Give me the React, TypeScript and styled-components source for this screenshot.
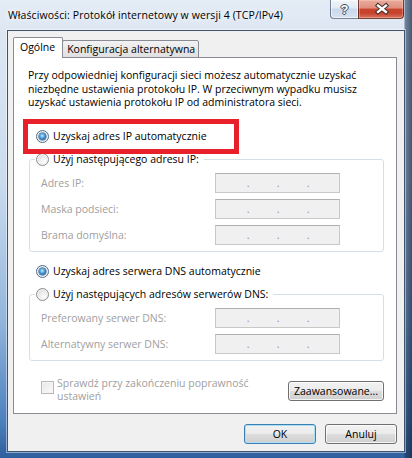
import React from "react";
import styled, { createGlobalStyle, css } from "styled-components";

const FONT = `"Open Sans", "Noto Sans", "Liberation Sans", sans-serif`;

const GlobalStyle = createGlobalStyle`
  html, body { margin: 0; padding: 0; }
  body { font-family: ${FONT}; }
  * { box-sizing: border-box; }
`;

const Window = styled.div`
  width: 412px;
  height: 458px;
  display: flex;
  flex-direction: column;
  padding: 0 7px 6px 7px;
  font-family: ${FONT};
  font-size: 10.5px;
  color: #000;
  overflow: hidden;
  background:
    linear-gradient(to right, rgba(255,255,255,0) 0, rgba(255,255,255,0) 404px, rgba(25,50,85,0.55) 405px, rgba(20,40,70,0.75) 412px),
    linear-gradient(to bottom, #e4ecf6 0, #dde7f3 30px, #cbdcee 180px, #93b6dc 320px, #4d81bf 420px, #2f5f9c 458px);
`;

const TitleBar = styled.div`
  height: 30px;
  flex: none;
  display: flex;
  align-items: flex-start;
  justify-content: space-between;
`;

const Title = styled.div`
  margin: 8px 0 0 1px;
  line-height: 14px;
  letter-spacing: 0.1px;
  white-space: nowrap;
  text-shadow: 0 0 6px #fff, 0 0 10px rgba(255, 255, 255, 0.85);
`;

const CaptionGroup = styled.div`
  display: flex;
  margin-right: 1px;
`;

const HelpButton = styled.div`
  width: 28px;
  height: 19px;
  display: flex;
  align-items: center;
  justify-content: center;
  border: 1px solid rgba(40, 55, 80, 0.6);
  border-top: none;
  border-right: none;
  border-bottom-left-radius: 4px;
  background: linear-gradient(#f1f5fb 0%, #e2eaf4 45%, #cbd8ea 50%, #d6e2f1 100%);
  box-shadow: inset 0 0 0 1px rgba(255, 255, 255, 0.6);
  color: #fff;
  font-family: "Liberation Sans", sans-serif;
  font-weight: bold;
  font-size: 13px;
  text-shadow: 1px 0 0 #3d4a5a, -1px 0 0 #3d4a5a, 0 1px 0 #3d4a5a, 0 -1px 0 #3d4a5a;
`;

const CloseButton = styled.div`
  width: 46px;
  height: 19px;
  border: 1px solid rgba(70, 25, 20, 0.7);
  border-top: none;
  border-bottom-right-radius: 4px;
  background: linear-gradient(#eaac9e 0%, #df8e7c 45%, #c9462f 50%, #c6412b 72%, #d9735e 100%);
  box-shadow: inset 0 0 0 1px rgba(255, 220, 210, 0.35);
  svg { display: block; }
`;

const Client = styled.div`
  flex: 1;
  display: flex;
  flex-direction: column;
  padding: 6px 7px 7px 5px;
  background: #f0f0f0;
  border: 1px solid #3f546c;
  box-shadow: 0 0 0 1px rgba(255, 255, 255, 0.45);
`;

const TabStrip = styled.div`
  display: flex;
  align-items: flex-end;
  height: 21px;
  margin-bottom: -1px;
  position: relative;
  z-index: 1;
`;

const Tab = styled.div<{ $active?: boolean }>`
  border: 1px solid #898c95;
  border-radius: 2px 2px 0 0;
  line-height: 13px;
  white-space: nowrap;
  ${(p) =>
    p.$active
      ? css`
          height: 21px;
          padding: 3px 7px 0 6px;
          border-bottom: none;
          background: #fff;
        `
      : css`
          height: 18px;
          margin-left: -1px;
          padding: 2px 3px 0 4px;
          background: linear-gradient(#f3f3f3, #e8e8e8 50%, #e0e0e0 100%);
        `}
`;

const Panel = styled.div`
  flex: 1;
  display: flex;
  flex-direction: column;
  background: #fff;
  border: 1px solid #898c95;
  padding: 11px 12px 0 14px;
`;

const Intro = styled.p`
  margin: 0;
  line-height: 13.5px;
`;

const RadioRow = styled.label<{ $mt: number }>`
  position: relative;
  display: flex;
  align-items: center;
  gap: 4px;
  height: 13px;
  line-height: 13px;
  margin: ${(p) => p.$mt}px 0 0 8px;
  white-space: nowrap;
`;

const Highlight = styled.span`
  position: absolute;
  left: -13px;
  top: -11px;
  width: 216px;
  height: 35px;
  border: 5px solid #e8202a;
  z-index: 2;
  pointer-events: none;
`;

const RadioCircle = styled.span<{ $checked?: boolean }>`
  position: relative;
  flex: none;
  width: 13px;
  height: 13px;
  border-radius: 50%;
  border: 1px solid #8a8c8e;
  background: radial-gradient(circle at 65% 70%, #fdfdfd 0, #ececec 45%, #cfcfcf 100%);
  box-shadow: inset 0 0 0 1px #f6f6f6;
  ${(p) =>
    p.$checked &&
    css`
      border-color: #4a6d8c;
      &::after {
        content: "";
        position: absolute;
        left: 2px;
        top: 2px;
        width: 7px;
        height: 7px;
        border-radius: 50%;
        background: radial-gradient(circle at 45% 40%, #c8ecff 0, #5aa9e6 35%, #11508e 85%);
        box-shadow: 0 0 0 0.5px #1f4f7e;
      }
    `}
`;

const Group = styled.fieldset<{ $mt: number }>`
  margin: ${(p) => p.$mt}px 0 0 1px;
  min-width: 0;
  padding: 7px 0 6px 11px;
  border: 1px solid #d5dfe5;
  border-radius: 3px;
  display: flex;
  flex-direction: column;
  gap: 6px;
`;

const Legend = styled.legend`
  margin-left: -6px;
  padding: 0 5px 0 1px;
  display: flex;
  align-items: center;
  gap: 4px;
  height: 13px;
  line-height: 13px;
  white-space: nowrap;
`;

const FieldRow = styled.div`
  display: flex;
  align-items: center;
  height: 20px;
`;

const FieldLabel = styled.span`
  width: 174px;
  color: #a0a0a0;
  line-height: 13px;
`;

const IpBox = styled.div`
  width: 125px;
  height: 20px;
  display: flex;
  align-items: center;
  padding-left: 3px;
  background: #f0f0f0;
  border: 1px solid #c8c8c8;
  border-top-color: #b0b0b0;
  color: #8a8aa2;
  line-height: 13px;
`;

const Octet = styled.span`
  width: 28px;
`;

const Dot = styled.span`
  width: 2px;
  display: flex;
  justify-content: center;
`;

const BottomRow = styled.div`
  display: flex;
  justify-content: space-between;
  align-items: flex-start;
  margin-top: 20px;
`;

const CheckRow = styled.label`
  display: flex;
  align-items: flex-start;
  gap: 3px;
  margin-left: 13px;
  color: #a0a0a0;
  line-height: 13px;
`;

const CheckBox = styled.span`
  flex: none;
  width: 13px;
  height: 13px;
  border: 1px solid #b8b8b8;
  background: linear-gradient(135deg, #e6e6e6, #fbfbfb);
  box-shadow: inset 0 0 0 1px #f4f4f4;
`;

const CheckText = styled.span`
  margin-top: -4px;
`;

const Button = styled.button<{ $w: number; $default?: boolean }>`
  width: ${(p) => p.$w}px;
  height: 20px;
  padding: 0;
  font: inherit;
  line-height: 13px;
  color: #000;
  border: 1px solid #707070;
  border-radius: 3px;
  background: linear-gradient(#f2f2f2 0%, #ebebeb 49%, #dddddd 50%, #cfcfcf 100%);
  box-shadow: inset 0 0 0 1px rgba(255, 255, 255, 0.75);
  ${(p) =>
    p.$default &&
    css`
      border-color: #3c7fb1;
      box-shadow: inset 0 0 0 1px #a9def6;
    `}
`;

const DialogButtons = styled.div`
  display: flex;
  justify-content: flex-end;
  gap: 9px;
  margin-top: 10px;
`;

const IpField = () => (
  <IpBox>
    <Octet />
    <Dot>.</Dot>
    <Octet />
    <Dot>.</Dot>
    <Octet />
    <Dot>.</Dot>
  </IpBox>
);

export default function App() {
  return (
    <>
      <GlobalStyle />
      <Window>
        <TitleBar>
          <Title>Właściwości: Protokół internetowy w wersji 4 (TCP/IPv4)</Title>
          <CaptionGroup>
            <HelpButton>?</HelpButton>
            <CloseButton>
              <svg width="45" height="18" viewBox="0 0 45 18">
                <path d="M19 5.5 L27 12 M27 5.5 L19 12" stroke="#43322f" strokeWidth="4.4" strokeLinecap="square" fill="none" />
                <path d="M19 5.5 L27 12 M27 5.5 L19 12" stroke="#ffffff" strokeWidth="2.3" strokeLinecap="square" fill="none" />
              </svg>
            </CloseButton>
          </CaptionGroup>
        </TitleBar>
        <Client>
          <TabStrip>
            <Tab $active>Ogólne</Tab>
            <Tab>Konfiguracja alternatywna</Tab>
          </TabStrip>
          <Panel>
            <Intro>
              Przy odpowiedniej konfiguracji sieci możesz automatycznie uzyskać
              <br />
              niezbędne ustawienia protokołu IP. W przeciwnym wypadku musisz
              <br />
              uzyskać ustawienia protokołu IP od administratora sieci.
            </Intro>
            <RadioRow $mt={20.5}>
              <RadioCircle $checked />
              Uzyskaj adres IP automatycznie
              <Highlight />
            </RadioRow>
            <Group $mt={10}>
              <Legend>
                <RadioCircle />
                Użyj następującego adresu IP:
              </Legend>
              <FieldRow>
                <FieldLabel>Adres IP:</FieldLabel>
                <IpField />
              </FieldRow>
              <FieldRow>
                <FieldLabel>Maska podsieci:</FieldLabel>
                <IpField />
              </FieldRow>
              <FieldRow>
                <FieldLabel>Brama domyślna:</FieldLabel>
                <IpField />
              </FieldRow>
            </Group>
            <RadioRow $mt={13}>
              <RadioCircle $checked />
              Uzyskaj adres serwera DNS automatycznie
            </RadioRow>
            <Group $mt={10}>
              <Legend>
                <RadioCircle />
                Użyj następujących adresów serwerów DNS:
              </Legend>
              <FieldRow>
                <FieldLabel>Preferowany serwer DNS:</FieldLabel>
                <IpField />
              </FieldRow>
              <FieldRow>
                <FieldLabel>Alternatywny serwer DNS:</FieldLabel>
                <IpField />
              </FieldRow>
            </Group>
            <BottomRow>
              <CheckRow>
                <CheckBox />
                <CheckText>
                  Sprawdź przy zakończeniu poprawność
                  <br />
                  ustawień
                </CheckText>
              </CheckRow>
              <Button $w={96}>Zaawansowane...</Button>
            </BottomRow>
          </Panel>
          <DialogButtons>
            <Button $w={72} $default>
              OK
            </Button>
            <Button $w={72}>Anuluj</Button>
          </DialogButtons>
        </Client>
      </Window>
    </>
  );
}
